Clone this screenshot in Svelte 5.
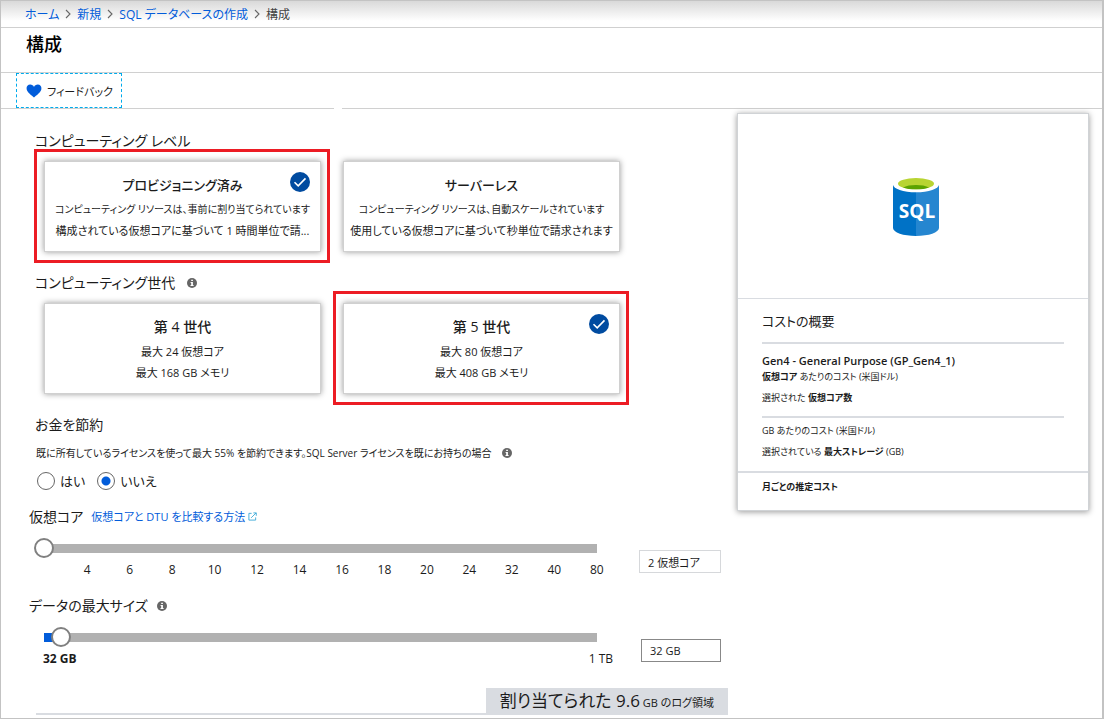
<script>
  let tier = $state('provisioned');
  let generation = $state('gen5');
  let owned = $state('no');
  let coreIndex = $state(0);
  let sizeGb = $state(32);

  const tiers = [
    {
      id: 'provisioned',
      title: 'プロビジョニング済み',
      lines: [
        'コンピューティング リソースは、事前に割り当てられています',
        '構成されている仮想コアに基づいて 1 時間単位で請...'
      ]
    },
    {
      id: 'serverless',
      title: 'サーバーレス',
      lines: [
        'コンピューティング リソースは、自動スケールされています',
        '使用している仮想コアに基づいて秒単位で請求されます'
      ]
    }
  ];
  const generations = [
    { id: 'gen4', title: '第 4 世代', lines: ['最大 24 仮想コア', '最大 168 GB メモリ'] },
    { id: 'gen5', title: '第 5 世代', lines: ['最大 80 仮想コア', '最大 408 GB メモリ'] }
  ];
  const cores = [2, 4, 6, 8, 10, 12, 14, 16, 18, 20, 24, 32, 40, 80];
  let fill = $derived((sizeGb / 1024) * 100);
</script>

{#snippet info()}
  <svg class="info" viewBox="0 0 10 10" aria-hidden="true">
    <circle cx="5" cy="5" r="5" fill="#666" />
    <path d="M4.2 1.7h1.7v1.4H4.2zM3.6 4h2.3v3.1h.7v1H3.5v-1h.7V5h-.6z" fill="#fff" />
  </svg>
{/snippet}

{#snippet card(item, selected, choose)}
  <div class="frame" class:selected>
    <button class="card" type="button" aria-pressed={selected} onclick={choose}>
      <span class="card-title">{item.title}</span>
      {#each item.lines as line}
        <span class="card-line">{line}</span>
      {/each}
      {#if selected}
        <svg class="check" viewBox="0 0 20 20" aria-hidden="true">
          <circle cx="10" cy="10" r="10" fill="#004ba0" />
          <path d="M4.5 10.2l3.7 3.6 7.3-7.4" fill="none" stroke="#fff" stroke-width="1.6" />
        </svg>
      {/if}
    </button>
  </div>
{/snippet}

{#snippet chevron()}
  <svg class="chevron" viewBox="0 0 6 10" aria-hidden="true">
    <path d="M1 1l4 4-4 4" fill="none" stroke="#666" stroke-width="1.1" />
  </svg>
{/snippet}

<div class="page">
  <nav class="crumbs">
    <a href="#home">ホーム</a>
    {@render chevron()}
    <a href="#new">新規</a>
    {@render chevron()}
    <a href="#create">SQL データベースの作成</a>
    {@render chevron()}
    <span>構成</span>
  </nav>

  <header>
    <h1>構成</h1>
  </header>

  <div class="commands">
    <button class="feedback" type="button">
      <svg viewBox="0 0 16 14" aria-hidden="true">
        <path
          d="M8 13.4C6 11.6 1 8.6.6 5 .3 2.300 2 .6 4.200.6 6 .6 7.300 1.500 8 2.900 8.700 1.500 10 .6 11.800.6 14 .6 15.700 2.300 15.400 5 15 8.600 10 11.600 8 13.400z"
          fill="#015cda"
        />
      </svg>
      フィードバック
    </button>
  </div>
  <div class="rule"><span></span><span></span></div>

  <main>
    <section class="form">
      <div class="compute">
        <h2>コンピューティング レベル</h2>
        <div class="cards tiers">
          {#each tiers as item}
            {@render card(item, tier === item.id, () => (tier = item.id))}
          {/each}
        </div>
        <h2>コンピューティング世代 {@render info()}</h2>
        <div class="cards">
          {#each generations as item}
            {@render card(item, generation === item.id, () => (generation = item.id))}
          {/each}
        </div>
        <h2>お金を節約</h2>
      </div>

      <p class="note">
        既に所有しているライセンスを使って最大 55% を節約できます。SQL Server ライセンスを既にお持ちの場合
        {@render info()}
      </p>
      <div class="radios">
        <label><input type="radio" name="owned" value="yes" bind:group={owned} />はい</label>
        <label><input type="radio" name="owned" value="no" bind:group={owned} />いいえ</label>
      </div>

      <div class="field-head">
        <label for="cores">仮想コア</label>
        <a href="#compare">
          仮想コアと DTU を比較する方法
          <svg viewBox="0 0 10 10" aria-hidden="true">
            <path d="M4 1.500H1v7.500h7.500V6M3.500 6.500l5.500-5.500M6 1h3.200v3.200" fill="none" stroke="#3aa9d8" />
          </svg>
        </a>
      </div>
      <div class="slider-row">
        <div>
          <input id="cores" type="range" min="0" max="13" bind:value={coreIndex} />
          <div class="ticks">
            {#each cores.slice(1) as n}<span>{n}</span>{/each}
          </div>
        </div>
        <input class="value" type="text" aria-label="仮想コア" readonly value="{cores[coreIndex]} 仮想コア" />
      </div>

      <div class="field-head">
        <label for="size">データの最大サイズ</label>
        {@render info()}
      </div>
      <div class="slider-row">
        <div>
          <input id="size" type="range" min="0" max="1024" bind:value={sizeGb} style="--fill: {fill}%" />
          <div class="ends"><strong>32 GB</strong><span>1 TB</span></div>
        </div>
        <input class="value editable" type="text" aria-label="データの最大サイズ" value="{sizeGb} GB" />
      </div>

      <div class="log"><p><span>割り当てられた 9.6</span> GB のログ領域</p></div>
    </section>

    <aside>
      <div class="logo">
        <svg viewBox="0 0 46 58" role="img" aria-label="SQL">
          <path d="M0 7v43c0 4.400 10.300 8 23 8V7z" fill="#0072c6" />
          <path d="M46 7v43c0 4.400-10.300 8-23 8V7z" fill="#2586d0" />
          <ellipse cx="23" cy="6.500" rx="23" ry="7.800" fill="#fff" />
          <ellipse cx="23" cy="5.700" rx="18" ry="5.600" fill="#b8d432" />
          <path d="M10 9.500c3-1.700 8-2.500 13-2.500s10 .8 13 2.500c-3 1.300-8 1.800-13 1.800s-10-.5-13-1.800z" fill="#5ba300" />
          <text x="24" y="40" text-anchor="middle">SQL</text>
        </svg>
      </div>
      <div class="cost">
        <h2>コストの概要</h2>
        <div class="group">
          <p class="plan">Gen4 - General Purpose (GP_Gen4_1)</p>
          <p><strong>仮想コア</strong> あたりのコスト (米国ドル)</p>
          <p class="second">選択された <strong>仮想コア数</strong></p>
        </div>
        <div class="group">
          <p>GB あたりのコスト (米国ドル)</p>
          <p class="second">選択されている <strong>最大ストレージ</strong> (GB)</p>
        </div>
      </div>
      <p class="total">月ごとの推定コスト</p>
    </aside>
  </main>
</div>

<style>
  :global(body) {
    margin: 0;
    background: #fff;
  }
  .page {
    box-sizing: border-box;
    min-height: 100vh;
    border: 1px solid #c3c3c3;
    border-right-width: 2px;
    color: #1b1b1b;
    font-family: 'Open Sans', 'Noto Sans CJK JP', sans-serif;
    font-size: 12px;
    font-feature-settings: 'palt';
  }
  h1,
  h2,
  p {
    margin: 0;
  }
  button,
  input {
    font: inherit;
    font-feature-settings: inherit;
    color: inherit;
  }
  a {
    color: #015cda;
    text-decoration: none;
  }
  .crumbs {
    display: flex;
    align-items: center;
    gap: 6px;
    height: 26px;
    padding-left: 24px;
    border-bottom: 1px solid #d0d0d0;
    background: linear-gradient(#d9d9d9, #fff 20px);
  }
  .crumbs span {
    color: #444;
  }
  .chevron {
    width: 6px;
    height: 10px;
  }
  header {
    height: 44px;
    padding-left: 25px;
    border-bottom: 1px solid #d0d0d0;
  }
  h1 {
    font-size: 18px;
    line-height: 32px;
    font-weight: 500;
    color: #000;
  }
  .commands {
    padding-left: 15px;
  }
  .feedback {
    display: flex;
    align-items: center;
    gap: 5px;
    height: 35px;
    padding: 0 8px 0 9px;
    border: 1px dashed #00abec;
    background: #fff;
    font-size: 11px;
  }
  .feedback svg {
    width: 16px;
    height: 14px;
  }
  .rule {
    display: flex;
    gap: 8px;
    height: 1px;
  }
  .rule span {
    flex: 760;
    background: #d0d0d0;
  }
  .rule span:first-child {
    flex: 333;
  }
  main {
    display: grid;
    grid-template-columns: minmax(0, 1fr) 352px;
    column-gap: 9px;
    align-items: start;
    padding-right: 13px;
  }
  .compute {
    margin: 0 99px 0 33px;
  }
  h2 {
    font-size: 14px;
    line-height: 16px;
    font-weight: 400;
  }
  .compute h2 {
    padding: 12px 0 0 1px;
  }
  .compute h2:first-child {
    padding-top: 24px;
  }
  .info {
    width: 10px;
    height: 10px;
    margin-left: 8px;
  }
  .cards {
    display: grid;
    grid-template-columns: 1fr 1fr;
    gap: 3px;
  }
  .frame {
    box-sizing: border-box;
    height: 114px;
    min-width: 0;
    padding: 9px 6px 8px 7px;
    border: 3px solid transparent;
  }
  .frame.selected {
    border-color: #ec1c24;
  }
  .card {
    position: relative;
    box-sizing: border-box;
    display: flex;
    flex-direction: column;
    align-items: center;
    width: 100%;
    height: 100%;
    padding: 11px 4px 0;
    border: 1px solid #d0d0d0;
    background: #fff;
    box-shadow: 0 0 6px rgba(0, 0, 0, 0.4);
    white-space: nowrap;
  }
  .card-title {
    padding-bottom: 2px;
    font-size: 14px;
    line-height: 24px;
    font-weight: 500;
  }
  .card-line {
    font-size: 11px;
    line-height: 21px;
  }
  .tiers .card-title {
    font-size: 13px;
  }
  .tiers .card-title + .card-line {
    font-size: 10px;
  }
  .check {
    position: absolute;
    top: 10px;
    right: 10px;
    width: 20px;
    height: 20px;
  }
  .note {
    padding: 11px 0 0 35px;
    font-size: 10px;
    line-height: 18px;
  }
  .note .info {
    vertical-align: -1px;
  }
  .radios {
    display: flex;
    gap: 12px;
    padding: 10px 0 0 36px;
    font-size: 13px;
    line-height: 18px;
  }
  .radios label {
    display: flex;
    gap: 5px;
  }
  .radios input {
    appearance: none;
    box-sizing: border-box;
    width: 18px;
    height: 18px;
    margin: 0;
    border: 1px solid #666;
    border-radius: 50%;
    background: #fff;
  }
  .radios input:checked {
    background: radial-gradient(circle, #015cda 4px, #fff 5px);
  }
  .field-head {
    display: flex;
    align-items: center;
    gap: 8px;
    padding: 17px 0 0 28px;
    font-size: 14px;
    line-height: 20px;
  }
  .field-head .info {
    margin-left: 1px;
  }
  .field-head a {
    font-size: 11px;
  }
  .field-head a svg {
    width: 9px;
    height: 9px;
  }
  .slider-row {
    display: grid;
    grid-template-columns: minmax(0, 1fr) 82px;
    column-gap: 21px;
    padding: 11px 7px 0 33px;
  }
  input[type='range'] {
    appearance: none;
    display: block;
    width: calc(100% - 21px);
    height: 20px;
    margin: 0;
    background: none;
  }
  input[type='range']::-webkit-slider-runnable-track {
    height: 9px;
    background: linear-gradient(
      90deg,
      transparent 10px,
      #015cda 10px calc(10px + var(--fill, 0%)),
      #b1b1b1 calc(10px + var(--fill, 0%))
    );
  }
  input[type='range']::-webkit-slider-thumb {
    appearance: none;
    box-sizing: border-box;
    width: 20px;
    height: 20px;
    margin-top: -6px;
    border: 2px solid #808080;
    border-radius: 50%;
    background: #fff;
  }
  .ticks {
    display: grid;
    grid-template-columns: repeat(13, 1fr);
    margin: 3px 0 0 32px;
    line-height: 18px;
    text-align: center;
  }
  .ends {
    display: flex;
    justify-content: space-between;
    margin: 3px 5px 0 9px;
    line-height: 18px;
  }
  .value {
    box-sizing: border-box;
    width: 82px;
    height: 23px;
    margin-top: 12px;
    padding: 0 8px;
    border: 1px solid #d6d8db;
    background: #fff;
    font-size: 11px;
    justify-self: end;
  }
  .value.editable {
    width: 80px;
    border-color: #888;
  }
  .log {
    display: flex;
    justify-content: flex-end;
    height: 25px;
    margin: 20px 0 0 35px;
    border-bottom: 2px solid #d9dce1;
  }
  .log p {
    padding: 0 14px;
    background: #d9dce1;
    font-size: 11px;
    line-height: 25px;
  }
  .log span {
    font-size: 17px;
  }
  aside {
    box-sizing: border-box;
    margin-top: 4px;
    border: 1px solid #d0d3d6;
    background: #fff;
    box-shadow: 0 1px 6px rgba(0, 0, 0, 0.4);
    font-size: 9px;
  }
  .logo {
    display: grid;
    place-items: center;
    box-sizing: border-box;
    height: 185px;
    padding: 2px 0 0 5px;
    border-bottom: 1px solid #d9dce1;
  }
  .logo svg {
    width: 46px;
    height: 58px;
  }
  .logo text {
    fill: #fff;
    font-size: 19px;
    font-weight: 700;
  }
  .cost {
    padding: 14px 24px 1px;
  }
  .cost h2 {
    font-size: 13px;
    padding-bottom: 13px;
  }
  .group {
    border-top: 2px solid #d9dce1;
    padding: 5px 0 10px;
    line-height: 16px;
  }
  .group .plan {
    padding-top: 4px;
    font-size: 11px;
    font-weight: 600;
  }
  .group .second {
    padding-top: 5px;
  }
  .total {
    padding: 6px 24px 15px;
    border-top: 2px solid #d9dce1;
    line-height: 16px;
    font-weight: 700;
  }
</style>
